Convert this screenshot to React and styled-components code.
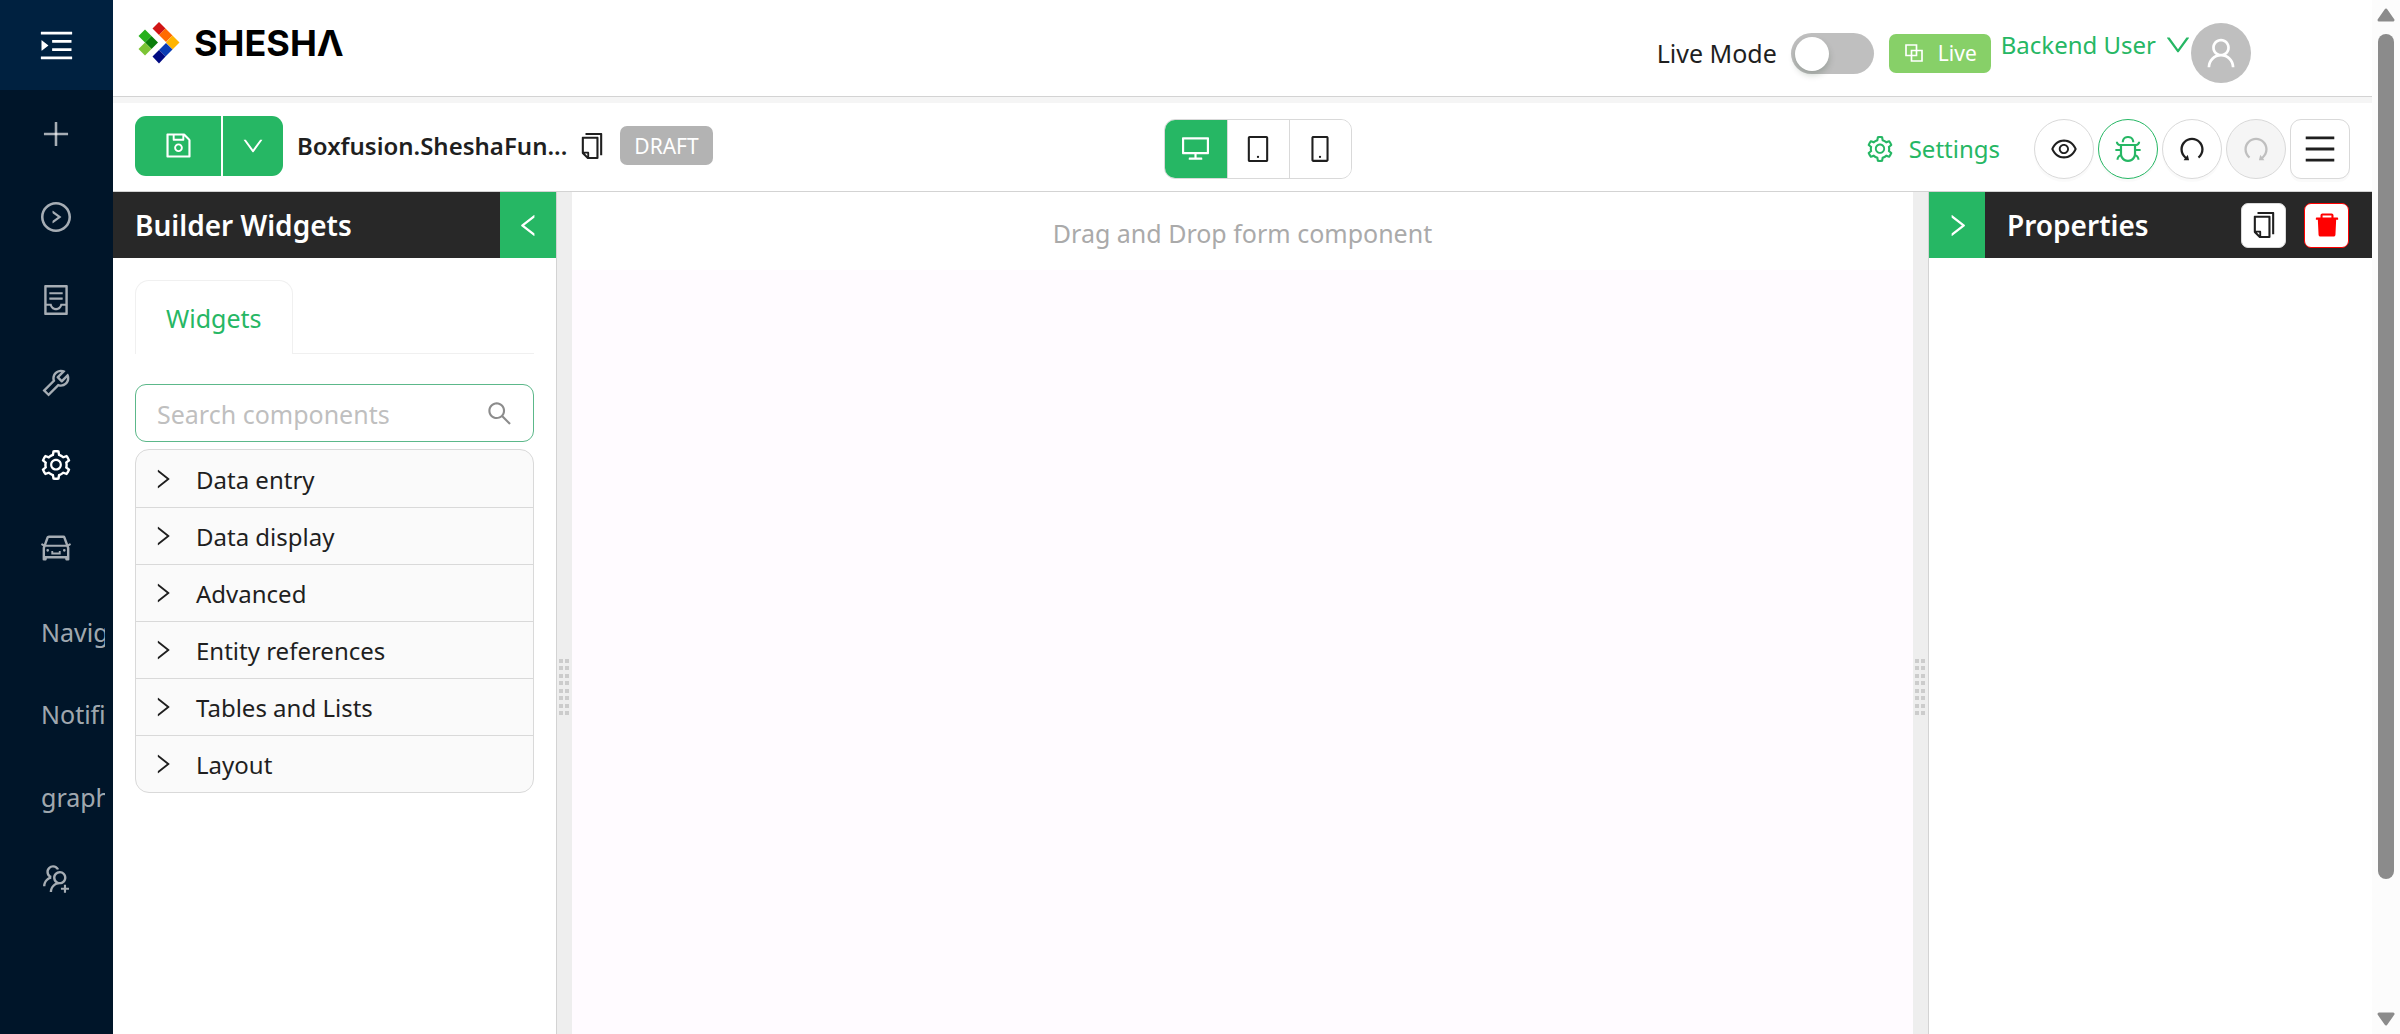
import React from 'react'
import styled, { createGlobalStyle, css } from 'styled-components'
import {
    AiFillDelete,
    AiOutlineBlock,
    AiOutlineBug,
    AiOutlineCar,
    AiOutlineContainer,
    AiOutlineCopy,
    AiOutlineDesktop,
    AiOutlineDown,
    AiOutlineEye,
    AiOutlineLeft,
    AiOutlineMenu,
    AiOutlineMenuUnfold,
    AiOutlineMobile,
    AiOutlinePlus,
    AiOutlineRedo,
    AiOutlineRight,
    AiOutlineRightCircle,
    AiOutlineSave,
    AiOutlineSearch,
    AiOutlineSetting,
    AiOutlineTablet,
    AiOutlineTool,
    AiOutlineUndo,
    AiOutlineUser,
    AiOutlineUsergroupAdd,
} from 'react-icons/ai'

const GREEN = '#26b764'
const DARK = '#282828'
const BORDER = '#d9d9d9'

const menuItems = [
    { label: 'Create', icon: AiOutlinePlus },
    { label: 'Run', icon: AiOutlineRightCircle },
    { label: 'Records', icon: AiOutlineContainer },
    { label: 'Tools', icon: AiOutlineTool },
    { label: 'Configuration', icon: AiOutlineSetting, active: true },
    { label: 'Vehicles', icon: AiOutlineCar },
    { label: 'Navigation' },
    { label: 'Notifications' },
    { label: 'graphs' },
    { label: 'Add users', icon: AiOutlineUsergroupAdd },
]

const widgetGroups = ['Data entry', 'Data display', 'Advanced', 'Entity references', 'Tables and Lists', 'Layout']

// the icon set leaves an empty frame round each glyph, crop it off
const Icon = ({ as: Glyph, size }) => <Glyph size={size} viewBox="64 64 896 896" aria-hidden="true" />

const Logo = () => (
    <LogoLink href="#" aria-label="SHESHΛ">
        <svg width="42" height="42" viewBox="0 0 42 42" aria-hidden="true">
            <path d="M7 7.500L13.500 14L7 20.500L0.500 14Z" fill="#27b11c" />
            <path d="M13.500 14L20 20.500L13.500 27L7 20.500Z" fill="#0a7d0a" />
            <path d="M7 20.500L13.500 27L7 33.500L0.500 27Z" fill="#7cc435" />
            <path d="M21 0L27.500 6.500L21 13L14.500 6.500Z" fill="#d01515" />
            <path d="M27.500 6.500L34.500 13.500L28 20L21 13Z" fill="#ff6a00" />
            <path d="M34.500 13.500L41.500 20.500L34.500 27.500L28 20.500Z" fill="#ffb400" />
            <path d="M28 21L34.500 27.500L27.500 34.500L21 28Z" fill="#0a3cb4" />
            <path d="M21 28L27.500 34.500L21 41.500L14.500 34.500Z" fill="#000a82" />
        </svg>
        <LogoText>SHESHΛ</LogoText>
    </LogoLink>
)

const Sidebar = () => (
    <Sider>
        <SiderTrigger aria-label="Expand menu">
            <Icon as={AiOutlineMenuUnfold} size={35} />
        </SiderTrigger>
        <Menu>
            {menuItems.map(({ label, icon, active }) => (
                <MenuItem key={label} href="#" aria-label={label} $active={active}>
                    {icon ? <Icon as={icon} size={30} /> : <MenuText>{label}</MenuText>}
                </MenuItem>
            ))}
        </Menu>
    </Sider>
)

const Header = () => (
    <TopBar>
        <Logo />
        <Account>
            <SwitchLabel>
                Live Mode
                <Switch type="checkbox" role="switch" />
            </SwitchLabel>
            <Tag $color="#87d068">
                <Icon as={AiOutlineBlock} size={22} />
                Live
            </Tag>
            <UserLink href="#">
                Backend User
                <Icon as={AiOutlineDown} size={26} />
            </UserLink>
            <Avatar>
                <Icon as={AiOutlineUser} size={32} />
            </Avatar>
        </Account>
    </TopBar>
)

const Toolbar = () => (
    <ToolbarRow>
        <ToolbarSide>
            <SaveGroup>
                <SaveButton aria-label="Save" $wide>
                    <Icon as={AiOutlineSave} size={27} />
                </SaveButton>
                <SaveButton aria-label="More save options">
                    <Icon as={AiOutlineDown} size={22} />
                </SaveButton>
            </SaveGroup>
            <FormName>
                <FormTitle>Boxfusion.SheshaFun...</FormTitle>
                <PlainButton aria-label="Copy form name">
                    <Icon as={AiOutlineCopy} size={26} />
                </PlainButton>
                <Tag $color="#b3b3b3">DRAFT</Tag>
            </FormName>
        </ToolbarSide>
        <DeviceGroup>
            <DeviceButton aria-label="Desktop" $active>
                <Icon as={AiOutlineDesktop} size={27} />
            </DeviceButton>
            <DeviceButton aria-label="Tablet">
                <Icon as={AiOutlineTablet} size={26} />
            </DeviceButton>
            <DeviceButton aria-label="Mobile">
                <Icon as={AiOutlineMobile} size={26} />
            </DeviceButton>
        </DeviceGroup>
        <ToolbarSide $end>
            <SettingsButton>
                <Icon as={AiOutlineSetting} size={26} />
                Settings
            </SettingsButton>
            <Actions>
                <RoundButton aria-label="Preview">
                    <Icon as={AiOutlineEye} size={26} />
                </RoundButton>
                <RoundButton aria-label="Debug" $green>
                    <Icon as={AiOutlineBug} size={26} />
                </RoundButton>
                <RoundButton aria-label="Undo">
                    <Icon as={AiOutlineUndo} size={26} />
                </RoundButton>
                <RoundButton aria-label="Redo" disabled>
                    <Icon as={AiOutlineRedo} size={26} />
                </RoundButton>
                <RoundButton aria-label="Menu" $square>
                    <Icon as={AiOutlineMenu} size={32} />
                </RoundButton>
            </Actions>
        </ToolbarSide>
    </ToolbarRow>
)

const Widgets = () => (
    <WidgetsPanel>
        <PanelHeader>
            <PanelTitle>Builder Widgets</PanelTitle>
            <Collapse aria-label="Collapse widgets">
                <Icon as={AiOutlineLeft} size={25} />
            </Collapse>
        </PanelHeader>
        <PanelBody>
            <Tabs>
                <Tab>Widgets</Tab>
            </Tabs>
            <SearchBox>
                <SearchInput placeholder="Search components" aria-label="Search components" />
                <Icon as={AiOutlineSearch} size={25} />
            </SearchBox>
            <Accordion>
                {widgetGroups.map((group) => (
                    <AccordionItem key={group}>
                        <Icon as={AiOutlineRight} size={22} />
                        <AccordionLabel>{group}</AccordionLabel>
                    </AccordionItem>
                ))}
            </Accordion>
        </PanelBody>
    </WidgetsPanel>
)

const Properties = () => (
    <PropertiesPanel>
        <PanelHeader>
            <Collapse aria-label="Collapse properties">
                <Icon as={AiOutlineRight} size={25} />
            </Collapse>
            <PanelTitle>Properties</PanelTitle>
            <PanelActions>
                <SmallButton aria-label="Copy">
                    <Icon as={AiOutlineCopy} size={26} />
                </SmallButton>
                <SmallButton aria-label="Delete" $danger>
                    <Icon as={AiFillDelete} size={26} />
                </SmallButton>
            </PanelActions>
        </PanelHeader>
    </PropertiesPanel>
)

const Splitter = () => (
    <Gutter>
        <Grip>
            {Array.from({ length: 16 }, (_, i) => (
                <Dot key={i} />
            ))}
        </Grip>
    </Gutter>
)

const App = () => {
    return (
        <>
            <GlobalStyle />
            <Page>
                <Sidebar />
                <Main>
                    <Header />
                    <Toolbar />
                    <Designer>
                        <Widgets />
                        <Splitter />
                        <Canvas>
                            <DropHint>Drag and Drop form component</DropHint>
                        </Canvas>
                        <Splitter />
                        <Properties />
                    </Designer>
                </Main>
                <Scrollbar aria-hidden="true">
                    <svg width="18" height="14" viewBox="0 0 18 14">
                        <path d="M9 2L16 12H2Z" fill="#8b8b8b" stroke="#8b8b8b" strokeWidth="3" strokeLinejoin="round" />
                    </svg>
                    <Track>
                        <Thumb />
                    </Track>
                    <svg width="18" height="14" viewBox="0 0 18 14">
                        <path d="M9 12L16 2H2Z" fill="#8b8b8b" stroke="#8b8b8b" strokeWidth="3" strokeLinejoin="round" />
                    </svg>
                </Scrollbar>
            </Page>
        </>
    )
}

export default App

const GlobalStyle = createGlobalStyle`
* {
    box-sizing: border-box;
}
body {
    margin: 0;
    font-family: "Noto Sans", "Open Sans", sans-serif;
    font-size: 24px;
    line-height: 36px;
    color: #1f1f1f;
    background: white;
}
button, input {
    font: inherit;
    color: inherit;
}
button {
    padding: 0;
    border: none;
    background: none;
    cursor: pointer;
}
a {
    text-decoration: none;
}
svg {
    display: block;
    flex: none;
}
`

const centered = css`
display: flex;
align-items: center;
justify-content: center;
`

const Page = styled.div`
display: flex;
height: 100vh;
overflow: hidden;
`

const Sider = styled.aside`
flex: none;
width: 113px;
background-color: #001529;
`

const SiderTrigger = styled.button`
${centered}
width: 100%;
height: 90px;
background-color: #002140;
color: white;
`

const Menu = styled.nav`
display: flex;
flex-direction: column;
height: 80vh;
margin-top: 3px;
`

const MenuItem = styled.a`
display: flex;
flex: 1;
align-items: center;
padding: 0 8px 0 41px;
color: ${(props) => (props.$active ? 'white' : 'rgba(255, 255, 255, 0.65)')};
`

const MenuText = styled.span`
padding-top: 2px;
overflow: hidden;
font-size: 25px;
white-space: nowrap;
`

const Main = styled.div`
display: flex;
flex: 1;
flex-direction: column;
min-width: 0;
`

const TopBar = styled.header`
display: flex;
justify-content: space-between;
height: 103px;
padding: 0 121px 0 25px;
border-bottom: 6px solid #f5f5f5;
box-shadow: inset 0 -1px 0 #d3d3d3;
`

const LogoLink = styled.a`
display: flex;
align-items: center;
height: 86px;
gap: 14px;
color: black;
`

const LogoText = styled.span`
font-family: Inter, sans-serif;
font-size: 36px;
font-weight: 700;
`

const Account = styled.div`
display: flex;
align-items: center;
height: 106px;
`

const SwitchLabel = styled.label`
display: flex;
align-items: center;
gap: 14px;
margin-right: 15px;
font-size: 25px;
`

const Switch = styled.input`
appearance: none;
width: 83px;
height: 41px;
margin: 0;
padding: 4px;
border-radius: 21px;
background-color: #bfbfbf;
cursor: pointer;
&::before {
    content: "";
    display: block;
    width: 34px;
    height: 34px;
    border-radius: 50%;
    background-color: white;
    box-shadow: 0 4px 7px rgba(0, 35, 11, 0.2);
}
&:checked {
    background-color: ${GREEN};
}
&:checked::before {
    margin-left: auto;
}
`

const Tag = styled.span`
display: flex;
align-items: center;
gap: 13px;
height: 39px;
padding: 0 14px;
border-radius: 7px;
background-color: ${(props) => props.$color};
color: white;
font-size: 21px;
`

const UserLink = styled.a`
display: flex;
align-items: center;
align-self: flex-start;
gap: 9px;
height: 90px;
margin-left: 10px;
color: ${GREEN};
`

const Avatar = styled.span`
${centered}
width: 60px;
height: 60px;
border-radius: 50%;
background-color: #bfbfbf;
color: white;
`

const ToolbarRow = styled.div`
display: flex;
align-items: center;
height: 89px;
padding: 3px 22px 0;
border-bottom: 1px solid #d3d3d3;
`

const ToolbarSide = styled.div`
display: flex;
flex: 1;
align-items: center;
justify-content: ${(props) => (props.$end ? 'flex-end' : 'flex-start')};
gap: ${(props) => (props.$end ? '34px' : '14px')};
padding-bottom: ${(props) => (props.$end ? '0' : '6px')};
`

const SaveGroup = styled.div`
display: flex;
gap: 2px;
border-radius: 11px;
overflow: hidden;
`

const SaveButton = styled.button`
${centered}
width: ${(props) => (props.$wide ? '86px' : '60px')};
height: 60px;
background-color: ${GREEN};
color: white;
`

const FormName = styled.div`
display: flex;
align-items: center;
gap: 12px;
`

const FormTitle = styled.span`
font-size: 24px;
font-weight: 600;
white-space: nowrap;
`

const PlainButton = styled.button`
${centered}
margin-right: 3px;
`

const DeviceGroup = styled.div`
display: flex;
margin-left: 30px;
border: 1px solid ${BORDER};
border-radius: 11px;
overflow: hidden;
`

const DeviceButton = styled.button`
${centered}
width: 62px;
height: 58px;
background-color: ${(props) => (props.$active ? GREEN : 'white')};
color: ${(props) => (props.$active ? 'white' : 'inherit')};
& + & {
    border-left: 1px solid ${BORDER};
}
`

const SettingsButton = styled.button`
display: flex;
align-items: center;
gap: 16px;
color: ${GREEN};
`

const Actions = styled.div`
display: flex;
gap: 4px;
`

const RoundButton = styled.button`
${centered}
width: 60px;
height: 60px;
border: 1px solid ${(props) => (props.$green ? GREEN : BORDER)};
border-radius: ${(props) => (props.$square ? '11px' : '50%')};
background-color: white;
color: ${(props) => (props.$green ? GREEN : 'inherit')};
box-shadow: 0 3px 0 rgba(0, 0, 0, 0.02);
&:disabled {
    background-color: #f5f5f5;
    color: #bfbfbf;
    box-shadow: none;
}
`

const Designer = styled.main`
display: flex;
flex: 1;
min-height: 0;
`

const WidgetsPanel = styled.section`
flex: none;
width: 444px;
border-right: 1px solid #d3d3d3;
`

const PropertiesPanel = styled.section`
flex: none;
width: 444px;
border-left: 1px solid #d3d3d3;
`

const PanelHeader = styled.div`
display: flex;
align-items: center;
height: 66px;
background-color: ${DARK};
color: white;
`

const PanelTitle = styled.h2`
flex: 1;
margin: 0;
padding-left: 22px;
font-size: 28px;
font-weight: 600;
`

const Collapse = styled.button`
${centered}
width: 56px;
height: 100%;
background-color: ${GREEN};
color: white;
`

const PanelActions = styled.div`
display: flex;
gap: 18px;
padding-right: 23px;
`

const SmallButton = styled.button`
${centered}
width: 45px;
height: 45px;
border: 1px solid ${(props) => (props.$danger ? '#f00' : BORDER)};
border-radius: 7px;
background-color: white;
color: ${(props) => (props.$danger ? '#f00' : '#1f1f1f')};
`

const PanelBody = styled.div`
padding: 22px;
`

const Tabs = styled.div`
display: flex;
margin-bottom: 30px;
box-shadow: inset 0 -1px 0 #f0f0f0;
`

const Tab = styled.button`
height: 74px;
padding: 0 30px;
border: 1px solid #f0f0f0;
border-bottom: none;
border-radius: 14px 14px 0 0;
background-color: white;
color: ${GREEN};
font-size: 25px;
`

const SearchBox = styled.div`
display: flex;
align-items: center;
height: 58px;
margin-bottom: 7px;
padding: 0 21px;
border: 1px solid #5cb88a;
border-radius: 11px;
color: #8c8c8c;
`

const SearchInput = styled.input`
flex: 1;
min-width: 0;
padding: 2px 0 0;
border: none;
outline: none;
background: none;
font-size: 25px;
&::placeholder {
    color: #bfbfbf;
    opacity: 1;
}
`

const Accordion = styled.div`
border: 1px solid ${BORDER};
border-radius: 14px;
background-color: #fafafa;
overflow: hidden;
`

const AccordionItem = styled.button`
display: flex;
align-items: center;
gap: 22px;
width: 100%;
height: 57px;
padding: 0 16px;
& + & {
    border-top: 1px solid ${BORDER};
}
`

const AccordionLabel = styled.span`
padding-top: 2px;
`

const Gutter = styled.div`
display: flex;
flex: none;
align-items: center;
width: 15px;
padding: 148px 0 0 2px;
background-color: #eee;
cursor: col-resize;
`

const Grip = styled.div`
display: grid;
grid-template-columns: 4px 4px;
align-content: space-between;
column-gap: 2px;
height: 57px;
`

const Dot = styled.span`
height: 4px;
background-color: #ccc;
`

const Canvas = styled.section`
flex: 1;
min-width: 0;
background-color: #fffbff;
`

const DropHint = styled.p`
margin: 0;
padding: 23px 0 19px;
background-color: white;
color: #aaa;
font-size: 25px;
text-align: center;
`

const Scrollbar = styled.div`
display: flex;
flex: none;
flex-direction: column;
align-items: center;
width: 28px;
padding: 8px 0;
background-color: #fcfcfc;
`

const Track = styled.div`
flex: 1;
padding: 12px 0;
`

const Thumb = styled.div`
width: 16px;
height: calc(100% * 7 / 8);
border-radius: 8px;
background-color: #8b8b8b;
`
